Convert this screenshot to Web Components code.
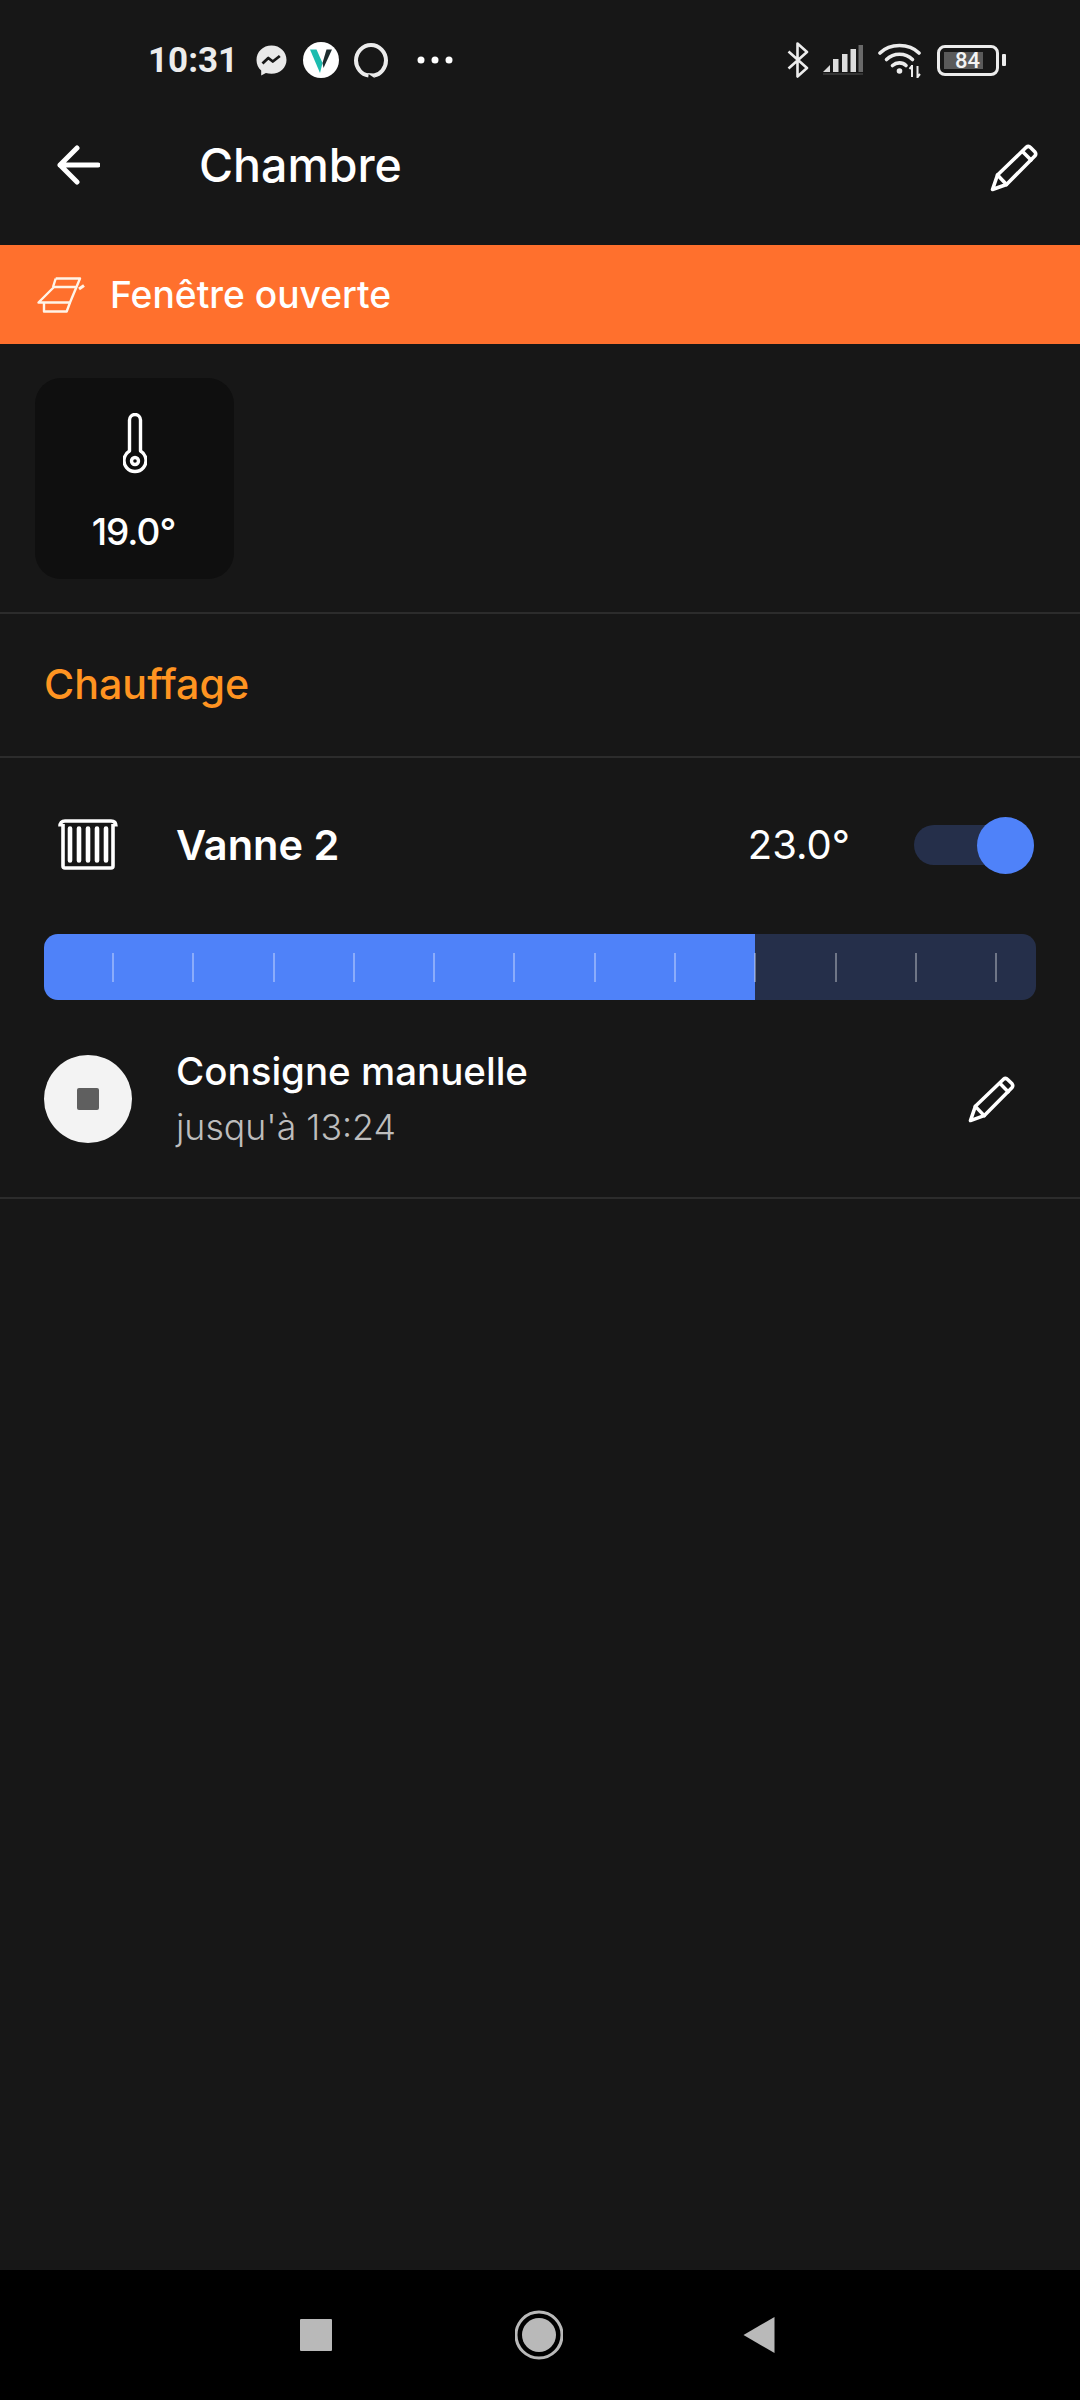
<!DOCTYPE html>
<html lang="fr">
<head>
<meta charset="utf-8">
<title>Chambre</title>
<style>
  html, body { margin: 0; height: 100%; }
  body {
    background: #171717;
    color: #fff;
    font-family: Inter, "Noto Sans", sans-serif;
    width: 1080px;
    height: 2400px;
    display: flex;
    flex-direction: column;
    overflow: hidden;
  }
  main { flex: 1; }
</style>
</head>
<body>
  <status-bar></status-bar>
  <app-header title="Chambre"></app-header>
  <main>
    <alert-banner>Fenêtre ouverte</alert-banner>
    <temp-panel value="19.0°"></temp-panel>
    <section-title>Chauffage</section-title>
    <valve-card name="Vanne 2" setpoint="23.0°" until="jusqu'à 13:24" mode="Consigne manuelle"></valve-card>
  </main>
  <nav-bar></nav-bar>

<script>
  // Shared pencil, used in the header and on the setpoint row
  const pencil = (size) => `
    <svg width="${size}" height="${size}" viewBox="0 0 48 48" fill="none" stroke="#fff" stroke-width="3.6" stroke-linejoin="round" stroke-linecap="round">
      <path d="M2.5 45.5 L7.5 31 L36 3.5 Q38.5 1.5 40.5 3.5 L45 8 Q46.5 10 44.8 12 L16.5 40.5 Z"/>
      <path d="M7.5 31 L16.5 40.5"/>
      <path d="M32.5 7.5 L41 16"/>
    </svg>`;

  function define(name, css, html) {
    customElements.define(name, class extends HTMLElement {
      constructor() {
        super();
        this.attachShadow({ mode: 'open' });
      }
      connectedCallback() {
        const attr = (key) => this.getAttribute(key) || '';
        this.shadowRoot.innerHTML = `<style>${css}</style>${html(attr)}`;
      }
    });
  }

  define('status-bar', `
    :host { display: flex; align-items: center; height: 120px; padding-left: 148px; box-sizing: border-box; color: #ececec; }
    .time { font: 700 35px Roboto, sans-serif; width: 108px; }
    svg { display: block; flex: none; }
    .right { margin-left: auto; display: flex; align-items: center; padding-right: 74px; }
  `, () => `
    <span class="time">10:31</span>
    <svg width="31" height="31" viewBox="0 0 31 31">
      <path fill="#e9e9e9" d="M15.5 0.5C7 0.5 0.5 6.7 0.5 15c0 4.300 1.800 8 4.700 10.600v5l4.700-2.600c1.800.5 3.600.8 5.600.8 8.500 0 15-6.300 15-13.800C30.500 6.700 24 .5 15.500.5z"/>
      <path fill="none" stroke="#171717" stroke-width="2.800" stroke-linejoin="round" d="M6.500 18.500l5.800-5.500 4.500 3.500 7-5.500"/>
    </svg>
    <svg width="36" height="36" viewBox="0 0 36 36" style="margin-left:16px">
      <circle cx="18" cy="18" r="18" fill="#fff"/>
      <path fill="#1cbcaf" d="M7 7.500h6.500l6 13.500-2.500 10z"/>
      <path fill="#1c2b2d" d="M19.500 21l4-13.500h5.500L20.500 26z"/>
    </svg>
    <svg width="36" height="37" viewBox="0 0 36 37" style="margin-left:14px">
      <path fill="none" stroke="#ececec" stroke-width="4" d="M15.500 33.500C8.500 32.500 3 26 3 18.500 3 10 9.800 3 18 3s15 7 15 15.500c0 7.500-5.500 14-12 15"/>
      <path fill="#ececec" d="M14 31l7 .5 .5 4.500z"/>
    </svg>
    <svg width="36" height="8" viewBox="0 0 36 8" fill="#fff" style="margin-left:28px">
      <circle cx="4" cy="4" r="3.500"/><circle cx="18" cy="4" r="3.500"/><circle cx="32" cy="4" r="3.500"/>
    </svg>
    <div class="right">
      <svg width="22" height="36" viewBox="0 0 22 36" fill="none" stroke="#ececec" stroke-width="2.600" stroke-linejoin="round">
        <path d="M1.500 9.500L20 26 10.500 34.500V1.500L20 10 1.500 26.500"/>
      </svg>
      <svg width="40" height="30" viewBox="0 0 40 30" style="margin-left:14px">
        <g fill="#dcdcdc">
          <path d="M0 27h7v-7z"/><rect x="10" y="14" width="5.500" height="13"/><rect x="19" y="9" width="5.500" height="18"/><rect x="27.500" y="4" width="5.500" height="23"/>
          <rect x="0" y="28.500" width="40" height="1" opacity=".3"/>
        </g>
        <rect x="35.500" y="0" width="4.500" height="27" fill="#6a6a6a"/>
      </svg>
      <svg width="46" height="36" viewBox="0 0 46 36" style="margin-left:15px" fill="none" stroke="#ececec" stroke-width="3.600" stroke-linecap="round">
        <path d="M2 11C12 1 31 1 41 11"/>
        <path d="M8.500 17.500C15.500 10.500 27.500 10.500 34.500 17.500"/>
        <path d="M14.500 23.500C18.500 20 24.500 20 28 23.500"/>
        <circle cx="21.500" cy="29" r="2.800" fill="#ececec" stroke="none"/>
        <path stroke-width="2" stroke-linecap="butt" d="M34 23v12M39.500 24v12M31.500 27l2.500-3M42 32l-2.500 3"/>
      </svg>
      <div style="margin-left:13px;display:flex;align-items:center">
        <div style="width:62px;height:31px;box-sizing:border-box;border:3px solid #ececec;border-radius:8px;padding:4px;display:flex">
          <div style="width:47px;background:linear-gradient(90deg,#5a5a5a 0 84%,transparent 84%);display:flex;align-items:center;justify-content:center;font:500 22px Roboto,sans-serif;color:#f4f4f4">84</div>
        </div>
        <div style="width:4px;height:12px;background:#ececec;border-radius:1px;margin-left:3px"></div>
      </div>
    </div>
  `);

  define('app-header', `
    :host { display: flex; align-items: center; height: 90px; padding: 0 42px 0 57px; box-sizing: border-box; }
    h1 { margin: 0 0 0 99px; font: 500 46.500px Inter, sans-serif; color: #fff; flex: 1; }
    svg { display: block; }
    .pen { margin-top: 5px; }
  `, (attr) => `
    <svg width="43" height="40" viewBox="0 0 43 40" fill="none" stroke="#fff" stroke-width="5" stroke-linecap="round" stroke-linejoin="round">
      <path d="M41 20H3M20 3L3 20l17 17"/>
    </svg>
    <h1>${attr('title')}</h1>
    <div class="pen">${pencil(48)}</div>
  `);

  customElements.define('alert-banner', class extends HTMLElement {
    constructor() {
      super();
      this.attachShadow({ mode: 'open' }).innerHTML = `
        <style>
          :host { display: flex; align-items: center; height: 99px; margin-top: 35px; padding-left: 36px; box-sizing: border-box; background: #ff702d; color: #fff; font: 500 37.200px Inter, sans-serif; }
          svg { display: block; margin-right: 24px; }
        </style>
        <svg width="50" height="36" viewBox="0 0 50 36" fill="none" stroke="#fff4e8" stroke-width="2.400" stroke-linejoin="round">
          <path d="M19.700 1.500H44L34 25.500H2.500L18 10H39.500"/>
          <path d="M19.700 1.500L17 10"/>
          <path d="M8 25.500V34.500H30.700L34 25.500"/>
          <path d="M43 12L48 8.500" stroke-width="3"/>
        </svg>
        <slot></slot>`;
    }
  });

  define('temp-panel', `
    :host { display: block; padding: 34px 0 33px 35px; border-bottom: 2px solid #2c2c2c; }
    .tile { width: 199px; height: 201px; background: #0f0f0f; border-radius: 26px; display: flex; flex-direction: column; align-items: center; box-sizing: border-box; padding-top: 35px; }
    svg { display: block; }
    span { margin: 34px 2px 0 0; font: 500 37px Inter, sans-serif; letter-spacing: -1px; }
  `, (attr) => `
    <div class="tile">
      <svg width="24" height="62" viewBox="0 0 24 62" fill="none" stroke="#fff" stroke-width="3.400">
        <path d="M6.500 38V7a5.500 5.500 0 0 1 11 0V38a11 11 0 1 1-11 0z" stroke-linejoin="round"/>
        <circle cx="12" cy="48" r="3.500"/>
      </svg>
      <span>${attr('value')}</span>
    </div>
  `);

  customElements.define('section-title', class extends HTMLElement {
    constructor() {
      super();
      this.attachShadow({ mode: 'open' }).innerHTML = `
        <style>
          :host { display: flex; align-items: center; height: 144px; padding: 0 0 3px 44px; box-sizing: border-box; border-bottom: 2px solid #2c2c2c; color: #ff9421; font: 500 41.200px Inter, sans-serif; }
        </style>
        <slot></slot>`;
    }
  });

  define('valve-card', `
    :host { display: block; height: 441px; box-sizing: border-box; border-bottom: 2px solid #2c2c2c; padding: 0 44px; }
    .head { display: flex; align-items: center; height: 176px; padding-bottom: 3px; box-sizing: border-box; }
    .head svg { display: block; margin-left: 14px; flex: none; }
    .name { margin-left: 58px; font: 600 41.500px Inter, sans-serif; flex: 1; }
    .temp { font: 400 40px Inter, sans-serif; margin-right: 64px; }
    .toggle { position: relative; width: 120px; height: 40px; margin-right: 2px; background: #252f4a; border-radius: 20px; }
    .toggle::after { content: ""; position: absolute; right: 0; top: -8px; width: 57px; height: 57px; border-radius: 50%; background: #4f82f9; }
    .bar { height: 66px; border-radius: 14px; display: flex; align-items: center; padding-left: 68px; box-sizing: border-box;
      background: linear-gradient(90deg, #4f82f9 711px, #252f4a 711px); }
    .tick { flex: none; width: 80.300px; }
    .tick i { display: block; width: 2px; height: 29px; background: rgba(255,255,255,.34); }
    .mode { display: flex; align-items: center; margin-top: 49px; }
    .stop { width: 88px; height: 88px; border-radius: 50%; background: #f3f3f3; display: flex; align-items: center; justify-content: center; flex: none; }
    .stop i { display: block; width: 22px; height: 22px; background: #5f5f5f; border-radius: 2px; }
    .txt { margin-left: 44px; flex: 1; }
    .t1 { font: 500 38.500px Inter, sans-serif; line-height: 44px; }
    .t2 { font: 300 35.700px Inter, sans-serif; line-height: 44px; margin-top: 12px; color: #bdbdbd; }
    .edit { margin-right: 21px; }
    .edit svg { display: block; }
  `, (attr) => `
    <div class="head">
      <svg width="60" height="51" viewBox="0 0 60 51" fill="none" stroke="#fff" stroke-linejoin="round">
        <path stroke-width="3.600" d="M2 7.500Q2 2 7 2H53Q58 2 58 7.500M5 5V47Q5 49 7 49H53Q55 49 55 47V5"/>
        <path stroke-width="4.600" stroke-linecap="round" d="M12 9.500V41.500M21 9.500V41.500M30 9.500V41.500M39 9.500V41.500M48 9.500V41.500"/>
      </svg>
      <span class="name">${attr('name')}</span>
      <span class="temp">${attr('setpoint')}</span>
      <div class="toggle"></div>
    </div>
    <div class="bar">${'<div class="tick"><i></i></div>'.repeat(12)}</div>
    <div class="mode">
      <div class="stop"><i></i></div>
      <div class="txt">
        <div class="t1">${attr('mode')}</div>
        <div class="t2">${attr('until')}</div>
      </div>
      <div class="edit">${pencil(47)}</div>
    </div>
  `);

  define('nav-bar', `
    :host { display: flex; align-items: center; height: 130px; background: #000; position: relative; padding-left: 300px; box-sizing: border-box; }
    svg { display: block; flex: none; }
  `, () => `
    <svg width="32" height="32" viewBox="0 0 32 32"><rect width="32" height="32" rx="1" fill="#b9b9b9"/></svg>
    <svg width="48" height="50" viewBox="0 0 48 50" style="margin-left:183px" fill="none">
      <circle cx="24" cy="25" r="23" stroke="#b9b9b9" stroke-width="3"/>
      <circle cx="24" cy="25" r="17" fill="#b9b9b9"/>
    </svg>
    <svg width="32" height="38" viewBox="0 0 32 38" style="margin-left:180px"><path d="M0.500 19L31.500 1V37Z" fill="#b9b9b9"/></svg>
  `);
</script>
</body>
</html>
